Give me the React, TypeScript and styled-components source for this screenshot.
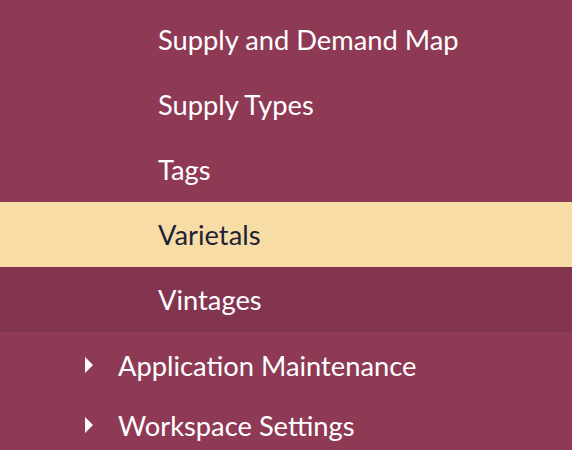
import React from "react";
import styled, { createGlobalStyle } from "styled-components";

const Global = createGlobalStyle`
  html, body { margin: 0; padding: 0; background: #8e3a55; }
  body { font-family: "Lato", "Noto Sans", sans-serif; }
`;

const Nav = styled.nav`
  width: 572px;
  height: 450px;
  overflow: hidden;
  background: #8e3a55;
  display: flex;
  flex-direction: column;
`;

const SubList = styled.ul`
  list-style: none;
  margin: 7px 0 0;
  padding: 0;
  display: flex;
  flex-direction: column;
`;

const SubItem = styled.li<{ $state?: "active" | "hover" }>`
  height: 65px;
  display: flex;
  align-items: center;
  padding-left: 158px;
  box-sizing: border-box;
  font-size: 27.3px;
  color: ${(p) => (p.$state === "active" ? "#1e2235" : "#ffffff")};
  background: ${(p) =>
    p.$state === "active" ? "#f8dca6" : p.$state === "hover" ? "#833550" : "transparent"};
`;

const GroupList = styled.ul`
  list-style: none;
  margin: 3px 0 0;
  padding: 0;
  display: flex;
  flex-direction: column;
`;

const GroupItem = styled.li`
  height: 60px;
  display: flex;
  align-items: center;
  padding-left: 85px;
  box-sizing: border-box;
  gap: 25px;
  font-size: 27.3px;
  color: #ffffff;
`;

const Caret = styled.span`
  width: 0;
  height: 0;
  border-top: 8px solid transparent;
  border-bottom: 8px solid transparent;
  border-left: 8px solid #ffffff;
`;

export default function App() {
  return (
    <>
      <Global />
      <Nav>
        <SubList>
          <SubItem>Supply and Demand Map</SubItem>
          <SubItem>Supply Types</SubItem>
          <SubItem>Tags</SubItem>
          <SubItem $state="active">Varietals</SubItem>
          <SubItem $state="hover">Vintages</SubItem>
        </SubList>
        <GroupList>
          <GroupItem>
            <Caret />
            Application Maintenance
          </GroupItem>
          <GroupItem>
            <Caret />
            Workspace Settings
          </GroupItem>
        </GroupList>
      </Nav>
    </>
  );
}
